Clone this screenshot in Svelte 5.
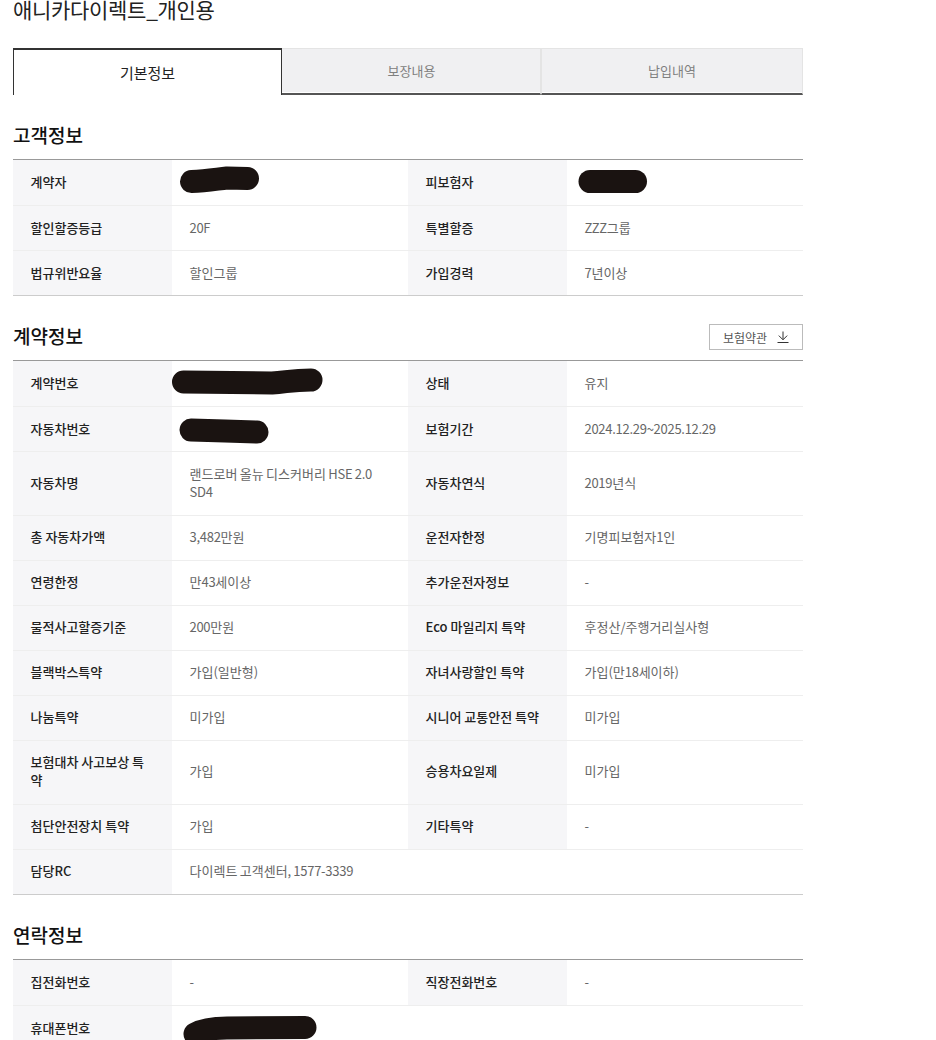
<script>
  const customer = [
    [['계약자', { d: 'M19.5 21.5 C35 21 45 19 55 18 L75.5 18.5' }], ['피보험자', { d: 'M23 21.5 L68.5 21.5' }]],
    [['할인할증등급', '20F'], ['특별할증', 'ZZZ그룹']],
    [['법규위반요율', '할인그룹'], ['가입경력', '7년이상']]
  ];
  const contract = [
    [['계약번호', { d: 'M11.5 21 L100 22 C115 21 120 19 139 19' }], ['상태', '유지']],
    [['자동차번호', { d: 'M19 23 L53 24 L85 25' }], ['보험기간', '2024.12.29~2025.12.29']],
    [['자동차명', '랜드로버 올뉴 디스커버리 HSE 2.0 SD4'], ['자동차연식', '2019년식']],
    [['총 자동차가액', '3,482만원'], ['운전자한정', '기명피보험자1인']],
    [['연령한정', '만43세이상'], ['추가운전자정보', '-']],
    [['물적사고할증기준', '200만원'], ['Eco 마일리지 특약', '후정산/주행거리실사형']],
    [['블랙박스특약', '가입(일반형)'], ['자녀사랑할인 특약', '가입(만18세이하)']],
    [['나눔특약', '미가입'], ['시니어 교통안전 특약', '미가입']],
    [['보험대차 사고보상 특약', '가입'], ['승용차요일제', '미가입']],
    [['첨단안전장치 특약', '가입'], ['기타특약', '-']],
    [['담당RC', '다이렉트 고객센터, 1577-3339']]
  ];
  const contact = [
    [['집전화번호', '-'], ['직장전화번호', '-']],
    [['휴대폰번호', { d: 'M23 28 C30 24 40 22 55 22 L133 21.5' }]]
  ];
  const sections = [
    { title: '고객정보', rows: customer },
    { title: '계약정보', rows: contract, download: true },
    { title: '연락정보', rows: contact }
  ];
  // Digit and Latin runs are set slightly tighter than the Hangul around them.
  const runs = (text) => text.match(/[0-9.,~A-Z-]+|[^0-9.,~A-Z-]+/g) ?? [];
  const isLatin = (run) => /^[0-9.,~A-Z-]+$/.test(run);
</script>

<div class="page">
  <h1>애니카다이렉트_개인용</h1>

  <div class="tabs">
    <button class="tab active">기본정보</button>
    <button class="tab">보장내용</button>
    <button class="tab">납입내역</button>
  </div>

  {#each sections as s}
    <section>
      <div class="head">
        <h2>{s.title}</h2>
        {#if s.download}
          <button class="dl">
            보험약관
            <svg width="12" height="12" viewBox="0 0 12 12" fill="none" stroke="#333" stroke-width="1">
              <path d="M6 0.5 V8.5 M1.8 4.6 L6 8.8 L10.2 4.6 M0.5 11.5 H11.5" />
            </svg>
          </button>
        {/if}
      </div>
      <table>
        <colgroup><col class="cth" /><col class="ctd" /><col class="cth" /><col class="ctd" /></colgroup>
        <tbody>
          {#each s.rows as row}
            <tr>
              {#each row as [label, value]}
                <th>{label}</th>
                <td colspan={row.length === 1 ? 3 : 1}>
                  {#if typeof value === 'string'}
                    {#each runs(value) as run}<span class:lat={isLatin(run)}>{run}</span>{/each}
                  {:else}
                    <svg class="mark" width="236" height="45" fill="none" stroke="#1a1311" stroke-width="23" stroke-linecap="round" stroke-linejoin="round">
                      <path d={value.d} />
                    </svg>
                    &nbsp;
                  {/if}
                </td>
              {/each}
            </tr>
          {/each}
        </tbody>
      </table>
    </section>
  {/each}
</div>

<style>
  :global(body) {
    margin: 0;
    background: #fff;
  }
  .page {
    width: 790px;
    height: 1040px;
    overflow: hidden;
    padding-left: 13px;
    font-family: "Noto Sans CJK KR", "Noto Sans", sans-serif;
    color: #111;
  }
  h1 {
    margin: 0;
    font-size: 21px;
    font-weight: 400;
    line-height: 18px;
    letter-spacing: -0.3px;
    color: #222;
  }
  .tabs {
    display: grid;
    grid-template-columns: 269px 259px 262px;
    margin-top: 30px;
    height: 47px;
  }
  .tab {
    font: inherit;
    font-size: 13px;
    color: #808080;
    background: #f0f0f2;
    border: 1px solid #e4e4e4;
    border-left: 0;
    border-bottom: 2px solid #555;
    padding: 0 0 2px;
    box-shadow: inset 0 -1px 0 #fff;
  }
  .tab.active {
    font-size: 15px;
    color: #222;
    background: #fff;
    border: 1px solid #333;
    border-top-width: 2px;
    border-bottom: 0;
    box-shadow: none;
    padding: 0;
  }
  .tab:nth-child(2) {
    padding-left: 1px;
  }
  .tab:nth-child(3) {
    border-left: 1px solid #e4e4e4;
  }
  section {
    width: 790px;
  }
  .head {
    display: flex;
    justify-content: space-between;
    align-items: center;
    height: 64px;
  }
  h2 {
    margin: 0;
    font-size: 19px;
    font-weight: 500;
    color: #111;
    line-height: 28px;
    position: relative;
    top: 8px;
  }
  .dl {
    font: inherit;
    font-size: 12px;
    color: #555;
    width: 94px;
    height: 26px;
    background: #fff;
    border: 1px solid #bbb;
    display: flex;
    align-items: center;
    justify-content: center;
    gap: 10px;
    padding: 0;
    position: relative;
    top: 9px;
  }
  table {
    width: 790px;
    table-layout: fixed;
    border-collapse: separate;
    border-spacing: 0;
    border-top: 1px solid #999;
    border-bottom: 1px solid #ccc;
    font-size: 13px;
    line-height: 18px;
  }
  .cth {
    width: 159px;
  }
  .ctd {
    width: 236px;
  }
  th,
  td {
    border-bottom: 1px solid #eee;
    padding: 13px 17px 13px 17.5px;
    text-align: left;
    box-sizing: border-box;
  }
  tr:last-child th,
  tr:last-child td {
    border-bottom: 0;
  }
  tr:first-child th,
  tr:first-child td,
  tr:nth-child(3):not(:last-child) th,
  tr:nth-child(3):not(:last-child) td {
    padding-bottom: 14px;
  }
  tr:nth-child(n + 4) th,
  tr:nth-child(n + 4) td {
    padding-top: 12px;
    padding-bottom: 14px;
  }
  tr:nth-child(9) th,
  tr:nth-child(9) td {
    padding-bottom: 15px;
  }
  th {
    background: #f6f6f8;
    font-weight: 500;
    color: #222;
  }
  td {
    color: #666;
    position: relative;
    word-spacing: -0.5px;
  }
  .lat {
    letter-spacing: -0.28px;
  }
  .mark {
    position: absolute;
    left: 0;
    top: 0;
    overflow: visible;
  }
</style>
